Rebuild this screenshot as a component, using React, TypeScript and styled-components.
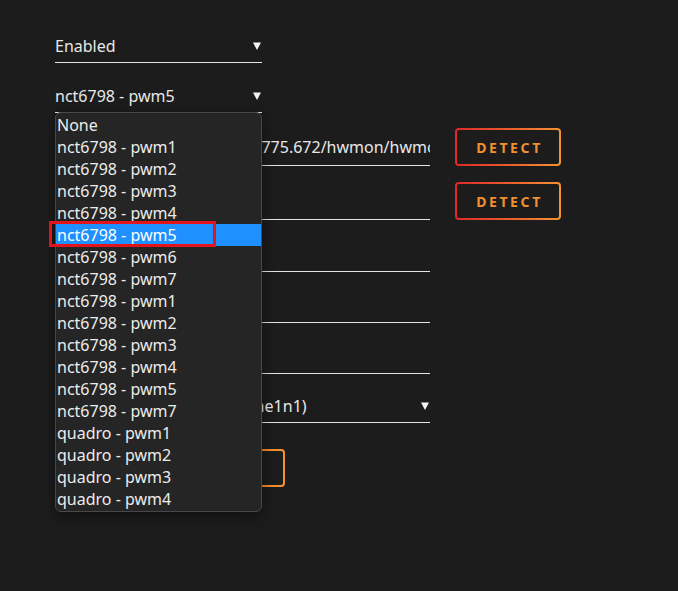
import React from 'react'
import styled, { createGlobalStyle } from 'styled-components'

const GlobalStyle = createGlobalStyle`
  html, body {
    margin: 0;
    padding: 0;
    background: #1c1c1c;
  }
  body {
    font-family: 'Noto Sans', 'Liberation Sans', sans-serif;
    color: #e8e8e8;
  }
`

const Page = styled.div`
  min-height: 591px;
  padding: 29px 0 0 55px;
  box-sizing: border-box;
`

const Form = styled.div`
  display: flex;
  flex-direction: column;
`

const Row = styled.div<{ $mt?: number }>`
  display: flex;
  align-items: stretch;
  gap: 25px;
  margin-top: ${(p) => p.$mt ?? 0}px;
`

const SelectBox = styled.div<{ $width: number; $height?: number }>`
  position: relative;
  display: flex;
  align-items: center;
  width: ${(p) => p.$width}px;
  height: ${(p) => p.$height ?? 34}px;
  box-sizing: border-box;
  border-bottom: 1px solid #e4e4e4;
  font-size: 16px;
  color: #e8e8e8;
  cursor: pointer;
`

const SelectText = styled.span`
  flex: 1;
  white-space: nowrap;
  overflow: hidden;
`

const Caret = styled.svg`
  flex: 0 0 auto;
  width: 8px;
  height: 8px;
  margin-right: 1px;
`

const TextInput = styled.input<{ $height: number }>`
  width: 375px;
  height: ${(p) => p.$height}px;
  box-sizing: border-box;
  padding: 0 0 0 6px;
  border: none;
  border-bottom: 1px solid #e4e4e4;
  background: transparent;
  color: #e8e8e8;
  font-family: 'Noto Sans', sans-serif;
  font-size: 16px;
  outline: none;
`

const OutlineButton = styled.button<{ $width: number }>`
  width: ${(p) => p.$width}px;
  height: 38px;
  box-sizing: border-box;
  border: 2px solid transparent;
  border-radius: 4px;
  background:
    linear-gradient(#1c1c1c, #1c1c1c) padding-box,
    linear-gradient(90deg, #e0262a, #f39331) border-box;
  color: #f28f2f;
  font-family: 'Noto Sans', sans-serif;
  font-weight: 700;
  font-size: 14px;
  letter-spacing: 2.6px;
  padding: 0 0 0 3px;
  cursor: pointer;
`

const Menu = styled.div`
  position: absolute;
  top: 100%;
  left: 0;
  width: 207px;
  box-sizing: border-box;
  padding: 1px 0;
  background: #252525;
  border: 1px solid #484848;
  border-radius: 6px;
  box-shadow: 0 4px 14px rgba(0, 0, 0, 0.45);
  z-index: 10;
`

const Option = styled.div<{ $active?: boolean }>`
  position: relative;
  height: 22px;
  line-height: 22px;
  padding-left: 1px;
  font-size: 16px;
  white-space: nowrap;
  color: ${(p) => (p.$active ? '#ffffff' : '#ececec')};
  background: ${(p) => (p.$active ? '#1e90ff' : 'transparent')};
`

const Highlight = styled.div`
  position: absolute;
  left: -7px;
  top: -3px;
  width: 167px;
  height: 26px;
  box-sizing: border-box;
  border: 3px solid #e4141b;
  pointer-events: none;
`

const options = [
  'None',
  'nct6798 - pwm1',
  'nct6798 - pwm2',
  'nct6798 - pwm3',
  'nct6798 - pwm4',
  'nct6798 - pwm5',
  'nct6798 - pwm6',
  'nct6798 - pwm7',
  'nct6798 - pwm1',
  'nct6798 - pwm2',
  'nct6798 - pwm3',
  'nct6798 - pwm4',
  'nct6798 - pwm5',
  'nct6798 - pwm7',
  'quadro - pwm1',
  'quadro - pwm2',
  'quadro - pwm3',
  'quadro - pwm4',
]

function CaretIcon() {
  return (
    <Caret viewBox="0 0 8 8">
      <polygon points="0,0.5 8,0.5 4,8" fill="#f2f2f2" />
    </Caret>
  )
}

export default function App() {
  const selected = 5
  return (
    <Page>
      <GlobalStyle />
      <Form>
        <SelectBox $width={207}>
          <SelectText>Enabled</SelectText>
          <CaretIcon />
        </SelectBox>

        <Row $mt={16}>
          <SelectBox $width={207}>
            <SelectText>nct6798 - pwm5</SelectText>
            <CaretIcon />
            <Menu>
              {options.map((o, i) => (
                <Option key={i} $active={i === selected}>
                  {o}
                  {i === selected && <Highlight />}
                </Option>
              ))}
            </Menu>
          </SelectBox>
        </Row>

        <Row $mt={15}>
          <TextInput
            $height={38}
            readOnly
            value="/sys/devices/platform/nct6775.672/hwmon/hwmon3/pwm5"
          />
          <OutlineButton $width={106}>DETECT</OutlineButton>
        </Row>

        <Row $mt={16}>
          <TextInput $height={38} readOnly value="" />
          <OutlineButton $width={106}>DETECT</OutlineButton>
        </Row>

        <Row $mt={16}>
          <TextInput $height={36} readOnly value="" />
        </Row>
        <Row $mt={15}>
          <TextInput $height={36} readOnly value="" />
        </Row>
        <Row $mt={15}>
          <TextInput $height={36} readOnly value="" />
        </Row>

        <Row $mt={15}>
          <SelectBox $width={375}>
            <SelectText>Samsung SSD 980 1TB (nvme1n1)</SelectText>
            <CaretIcon />
          </SelectBox>
        </Row>

        <Row $mt={26}>
          <OutlineButton $width={230} aria-label="Save" />
        </Row>
      </Form>
    </Page>
  )
}
